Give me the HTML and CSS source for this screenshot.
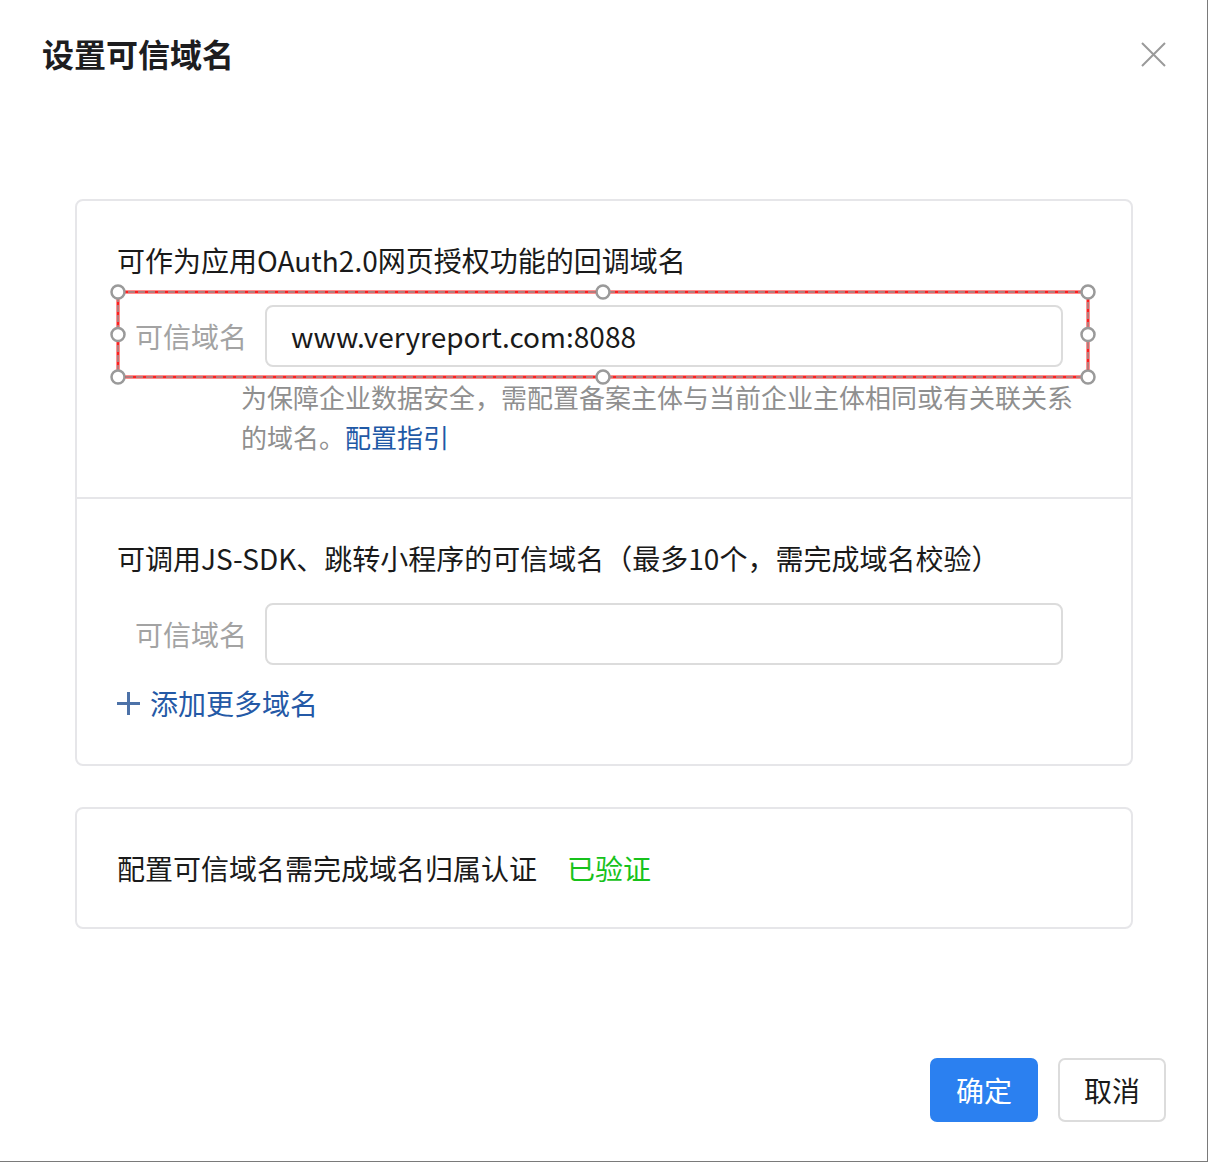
FILE: index.html
```html
<!DOCTYPE html>
<html lang="zh-CN">
<head>
<meta charset="utf-8">
<title>设置可信域名</title>
<link rel="stylesheet" href="styles.css">
</head>
<body>
<div class="dialog">
  <header class="dialog-header">
    <h1 class="dialog-title">设置可信域名</h1>
    <button class="close-btn" aria-label="关闭">
      <svg width="25" height="25" viewBox="0 0 25 25"><path d="M1 1 L24 24 M24 1 L1 24" stroke="#9a9a9a" stroke-width="2" fill="none"/></svg>
    </button>
  </header>

  <main class="dialog-body">
    <section class="card">
      <div class="card-section">
        <div class="section-title">可作为应用OAuth2.0网页授权功能的回调域名</div>
        <div class="field selected">
          <label class="field-label">可信域名</label>
          <div class="field-input">www.veryreport.com:8088</div>
          <svg class="selection" aria-hidden="true">
            <rect x="0" y="0" width="100%" height="100%" fill="none" stroke="#ff2020" stroke-width="3"/>
            <rect x="0" y="0" width="100%" height="100%" fill="none" stroke="#9a9a9a" stroke-width="1.5" stroke-dasharray="7 3"/>
            <circle cx="0" cy="0" r="6.5" class="handle"/>
            <circle cx="50%" cy="0" r="6.5" class="handle"/>
            <circle cx="100%" cy="0" r="6.5" class="handle"/>
            <circle cx="0" cy="50%" r="6.5" class="handle"/>
            <circle cx="100%" cy="50%" r="6.5" class="handle"/>
            <circle cx="0" cy="100%" r="6.5" class="handle"/>
            <circle cx="50%" cy="100%" r="6.5" class="handle"/>
            <circle cx="100%" cy="100%" r="6.5" class="handle"/>
          </svg>
        </div>
        <div class="help">为保障企业数据安全，需配置备案主体与当前企业主体相同或有关联关系的域名。<a class="link" href="#">配置指引</a></div>
      </div>
      <div class="card-section">
        <div class="section-title">可调用JS-SDK、跳转小程序的可信域名（最多10个，需完成域名校验）</div>
        <div class="field">
          <label class="field-label">可信域名</label>
          <div class="field-input"></div>
        </div>
        <a class="add-more" href="#">
          <svg width="23" height="23" viewBox="0 0 23 23"><path d="M11.5 0 V23 M0 11.5 H23" stroke="#4d72a8" stroke-width="3" fill="none"/></svg>
          <span>添加更多域名</span>
        </a>
      </div>
    </section>

    <section class="card card-verify">
      <span>配置可信域名需完成域名归属认证</span>
      <span class="verified">已验证</span>
    </section>
  </main>

  <footer class="dialog-footer">
    <button class="btn btn-primary">确定</button>
    <button class="btn btn-default">取消</button>
  </footer>
</div>
</body>
</html>
```

FILE: styles.css
```css
* { box-sizing: border-box; }

html, body {
  margin: 0;
  padding: 0;
  background: #ffffff;
}

body {
  font-family: "Noto Sans CJK SC", "Noto Sans", sans-serif;
  color: #1a1a1a;
}

.dialog {
  width: 1208px;
  height: 1162px;
  border-right: 1px solid #7a7a7a;
  border-bottom: 1px solid #7a7a7a;
  display: flex;
  flex-direction: column;
  background: #fff;
}

.dialog-header {
  display: flex;
  justify-content: space-between;
  align-items: flex-start;
  padding: 33px 41px 0 42px;
}

.dialog-title {
  margin: 0;
  font-size: 32px;
  line-height: 40px;
  font-weight: 700;
  color: #1d1d1f;
}

.close-btn {
  border: 0;
  background: none;
  padding: 0;
  margin-top: 9px;
  width: 25px;
  height: 25px;
  cursor: pointer;
}
.close-btn svg { display: block; }

.dialog-body {
  padding: 126px 74px 0 75px;
  display: flex;
  flex-direction: column;
  gap: 41px;
}

.card {
  border: 2px solid #e6e6e9;
  border-radius: 8px;
}

.card-section {
  padding: 39px 40px 40px 40px;
}
.card-section + .card-section {
  border-top: 2px solid #e6e6e9;
  padding-bottom: 41px;
}

.section-title {
  font-size: 28px;
  line-height: 40px;
  color: #1a1a1a;
}

.field {
  position: relative;
  display: flex;
  align-items: center;
  gap: 18px;
  margin-top: 25px;
}

.field-label {
  width: 130px;
  text-align: right;
  font-size: 28px;
  color: #a3a3a3;
  line-height: 40px;
}

.field-input {
  width: 798px;
  height: 62px;
  border: 2px solid #dcdcdc;
  border-radius: 8px;
  padding: 0 24px;
  font-size: 28px;
  line-height: 58px;
  color: #1a1a1a;
}

.selection {
  position: absolute;
  top: -13px;
  left: 1px;
  width: calc(100% - 4px);
  height: calc(100% + 23px);
  overflow: visible;
  pointer-events: none;
}
.selection .handle {
  fill: #ffffff;
  stroke: #9a9a9a;
  stroke-width: 2.5;
}

.help {
  margin: 10px 0 0 124px;
  font-size: 26px;
  line-height: 40px;
  color: #8f8f8f;
}

.link {
  color: #1f59a6;
  text-decoration: none;
}

.add-more {
  display: inline-flex;
  align-items: center;
  gap: 10px;
  margin-top: 18px;
  font-size: 28px;
  line-height: 40px;
  color: #2459a6;
  text-decoration: none;
}
.add-more svg { display: block; }

.card-verify {
  padding: 39px 40px;
  font-size: 28px;
  line-height: 40px;
  color: #1a1a1a;
  display: flex;
  gap: 30px;
}

.verified {
  color: #17c21b;
}

.dialog-footer {
  margin-top: auto;
  display: flex;
  justify-content: flex-end;
  gap: 20px;
  padding: 0 41px 39px 0;
}

.btn {
  width: 108px;
  height: 64px;
  border-radius: 7px;
  font-family: inherit;
  font-size: 28px;
  cursor: pointer;
  padding: 0;
}
.btn-primary {
  background: #2b80f0;
  border: 0;
  color: #ffffff;
}
.btn-default {
  background: #ffffff;
  border: 2px solid #dcdcdc;
  color: #1a1a1a;
}
```
